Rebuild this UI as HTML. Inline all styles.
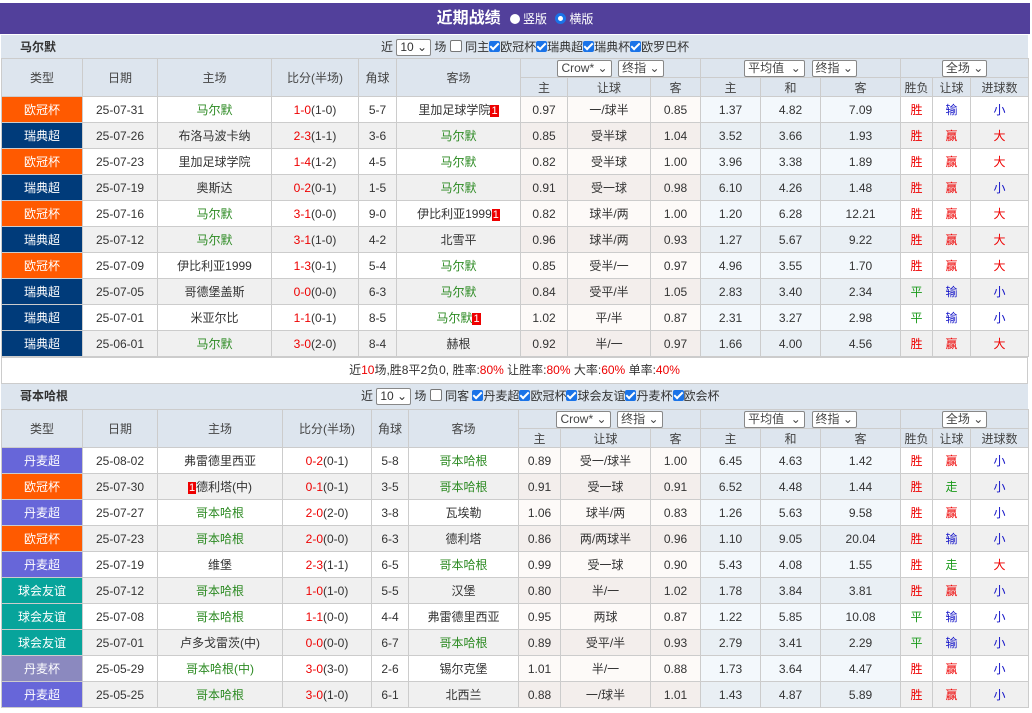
<!DOCTYPE html><html><head><meta charset="utf-8"><style>
body{margin:0;background:#fff;font-family:"Liberation Sans","Noto Sans CJK SC",sans-serif;font-size:12px;color:#333;width:1032px;height:713px;overflow:hidden}
.title{position:absolute;left:0;top:3px;width:1030px;height:31px;background:#52409b;color:#fff;text-align:center;line-height:31px;font-size:16px;font-weight:bold}
.title span{font-size:12px;font-weight:normal}
.rad{display:inline-block;width:10px;height:10px;border-radius:50%;background:#fff;vertical-align:-1px;margin:0 3px 0 5px}
.rad2{background:#fff;border:3px solid #1a73e8;width:5px;height:5px}
.sec{position:absolute;left:1px;width:1027px;height:25px;background:#dde5ee;line-height:25px}
.sec b{position:absolute;left:19px;font-size:12px}
.sec .f{position:absolute;top:0;white-space:nowrap;font-size:12px}
.sel{display:inline-block;border:1px solid #888;background:#fff;height:15px;line-height:15px;padding:0 3px;vertical-align:middle;border-radius:2px;font-size:12px}
.cb{display:inline-block;width:11px;height:11px;border-radius:2px;background:#1a73e8;vertical-align:-1px;position:relative}
.cb:after{content:"";position:absolute;left:3px;top:0px;width:3px;height:7px;border:solid #fff;border-width:0 2px 2px 0;transform:rotate(45deg)}
.cbe{display:inline-block;width:10px;height:10px;border:1px solid #777;border-radius:2px;background:#fff;vertical-align:-1px}
table{position:absolute;left:1px;border-collapse:collapse;table-layout:fixed;width:1027px}
td{border:1px solid #ccc;text-align:center;height:25px;padding:0;white-space:nowrap;overflow:hidden;font-size:12px}
tr.h td{background:#dde5ee;height:18px;color:#444}
tr.g td{background:#f0f0f0}
tr.g td.o{background:#f3eeec}tr.g td.a{background:#e9eff4}
td.o{background:#fdfaf8}td.a{background:#f3f8fc}
.t{color:#fff!important}
.ucl{background:#ff5a00!important}.swe{background:#003b7a!important}.dk{background:#6766d9!important}.fr{background:#07a49b!important}.dc{background:#8b89bf!important}
.gr{color:#2c8a22}.r{color:#e00}.bl{color:#1515c8}.gn{color:#1a9a1a}
.n{background:#e00;color:#fff;padding:0 1px;font-size:11px}
.sum{position:absolute;left:1px;top:357px;width:1025px;height:25px;border:1px solid #ccc;text-align:center;line-height:25px}
</style></head><body>
<div class="title">近期战绩 <span><i class="rad"></i>竖版 <i class="rad rad2"></i>横版</span></div>

<div class="sec" style="top:35px"><b>马尔默</b><div class="f" style="left:380px">近 <span class="sel">10 ⌄</span> 场 <i class="cbe"></i> 同主<i class="cb"></i>欧冠杯<i class="cb"></i>瑞典超<i class="cb"></i>瑞典杯<i class="cb"></i>欧罗巴杯</div></div>
<table style="top:58px">
<colgroup><col style="width:81px"><col style="width:75px"><col style="width:114px"><col style="width:87px"><col style="width:38px"><col style="width:124px"><col style="width:47px"><col style="width:83px"><col style="width:50px"><col style="width:60px"><col style="width:60px"><col style="width:80px"><col style="width:32px"><col style="width:38px"><col style="width:58px"></colgroup>
<tr class="h"><td rowspan="2">类型</td><td rowspan="2">日期</td><td rowspan="2">主场</td><td rowspan="2">比分(半场)</td><td rowspan="2">角球</td><td rowspan="2">客场</td><td colspan="3"><span class="sel">Crow* ⌄</span> &nbsp;<span class="sel">终指 ⌄</span></td><td colspan="3"><span class="sel">平均值 &nbsp;⌄</span> &nbsp;<span class="sel">终指 ⌄</span></td><td colspan="3"><span class="sel">全场 ⌄</span></td></tr>
<tr class="h"><td>主</td><td>让球</td><td>客</td><td>主</td><td>和</td><td>客</td><td>胜负</td><td>让球</td><td>进球数</td></tr>
<tr><td class="t ucl">欧冠杯</td><td>25-07-31</td><td class="gr">马尔默</td><td><span class="r">1-0</span>(1-0)</td><td>5-7</td><td>里加足球学院<span class="n">1</span></td><td class="o">0.97</td><td class="o">一/球半</td><td class="o">0.85</td><td class="a">1.37</td><td class="a">4.82</td><td class="a">7.09</td><td class="r">胜</td><td class="bl">输</td><td class="bl">小</td></tr>
<tr class="g"><td class="t swe">瑞典超</td><td>25-07-26</td><td>布洛马波卡纳</td><td><span class="r">2-3</span>(1-1)</td><td>3-6</td><td class="gr">马尔默</td><td class="o">0.85</td><td class="o">受半球</td><td class="o">1.04</td><td class="a">3.52</td><td class="a">3.66</td><td class="a">1.93</td><td class="r">胜</td><td class="r">赢</td><td class="r">大</td></tr>
<tr><td class="t ucl">欧冠杯</td><td>25-07-23</td><td>里加足球学院</td><td><span class="r">1-4</span>(1-2)</td><td>4-5</td><td class="gr">马尔默</td><td class="o">0.82</td><td class="o">受半球</td><td class="o">1.00</td><td class="a">3.96</td><td class="a">3.38</td><td class="a">1.89</td><td class="r">胜</td><td class="r">赢</td><td class="r">大</td></tr>
<tr class="g"><td class="t swe">瑞典超</td><td>25-07-19</td><td>奥斯达</td><td><span class="r">0-2</span>(0-1)</td><td>1-5</td><td class="gr">马尔默</td><td class="o">0.91</td><td class="o">受一球</td><td class="o">0.98</td><td class="a">6.10</td><td class="a">4.26</td><td class="a">1.48</td><td class="r">胜</td><td class="r">赢</td><td class="bl">小</td></tr>
<tr><td class="t ucl">欧冠杯</td><td>25-07-16</td><td class="gr">马尔默</td><td><span class="r">3-1</span>(0-0)</td><td>9-0</td><td>伊比利亚1999<span class="n">1</span></td><td class="o">0.82</td><td class="o">球半/两</td><td class="o">1.00</td><td class="a">1.20</td><td class="a">6.28</td><td class="a">12.21</td><td class="r">胜</td><td class="r">赢</td><td class="r">大</td></tr>
<tr class="g"><td class="t swe">瑞典超</td><td>25-07-12</td><td class="gr">马尔默</td><td><span class="r">3-1</span>(1-0)</td><td>4-2</td><td>北雪平</td><td class="o">0.96</td><td class="o">球半/两</td><td class="o">0.93</td><td class="a">1.27</td><td class="a">5.67</td><td class="a">9.22</td><td class="r">胜</td><td class="r">赢</td><td class="r">大</td></tr>
<tr><td class="t ucl">欧冠杯</td><td>25-07-09</td><td>伊比利亚1999</td><td><span class="r">1-3</span>(0-1)</td><td>5-4</td><td class="gr">马尔默</td><td class="o">0.85</td><td class="o">受半/一</td><td class="o">0.97</td><td class="a">4.96</td><td class="a">3.55</td><td class="a">1.70</td><td class="r">胜</td><td class="r">赢</td><td class="r">大</td></tr>
<tr class="g"><td class="t swe">瑞典超</td><td>25-07-05</td><td>哥德堡盖斯</td><td><span class="r">0-0</span>(0-0)</td><td>6-3</td><td class="gr">马尔默</td><td class="o">0.84</td><td class="o">受平/半</td><td class="o">1.05</td><td class="a">2.83</td><td class="a">3.40</td><td class="a">2.34</td><td class="gn">平</td><td class="bl">输</td><td class="bl">小</td></tr>
<tr><td class="t swe">瑞典超</td><td>25-07-01</td><td>米亚尔比</td><td><span class="r">1-1</span>(0-1)</td><td>8-5</td><td class="gr">马尔默<span class="n">1</span></td><td class="o">1.02</td><td class="o">平/半</td><td class="o">0.87</td><td class="a">2.31</td><td class="a">3.27</td><td class="a">2.98</td><td class="gn">平</td><td class="bl">输</td><td class="bl">小</td></tr>
<tr class="g"><td class="t swe">瑞典超</td><td>25-06-01</td><td class="gr">马尔默</td><td><span class="r">3-0</span>(2-0)</td><td>8-4</td><td>赫根</td><td class="o">0.92</td><td class="o">半/一</td><td class="o">0.97</td><td class="a">1.66</td><td class="a">4.00</td><td class="a">4.56</td><td class="r">胜</td><td class="r">赢</td><td class="r">大</td></tr>
</table>
<div class="sum">近<span class="r">10</span>场,胜8平2负0, 胜率:<span class="r">80%</span> 让胜率:<span class="r">80%</span> 大率:<span class="r">60%</span> 单率:<span class="r">40%</span></div>

<div class="sec" style="top:384px"><b>哥本哈根</b><div class="f" style="left:360px">近 <span class="sel">10 ⌄</span> 场 <i class="cbe"></i> 同客 <i class="cb"></i>丹麦超<i class="cb"></i>欧冠杯<i class="cb"></i>球会友谊<i class="cb"></i>丹麦杯<i class="cb"></i>欧会杯</div></div>
<table style="top:409px">
<colgroup><col style="width:81px"><col style="width:75px"><col style="width:125px"><col style="width:89px"><col style="width:37px"><col style="width:110px"><col style="width:42px"><col style="width:90px"><col style="width:50px"><col style="width:60px"><col style="width:60px"><col style="width:80px"><col style="width:32px"><col style="width:38px"><col style="width:58px"></colgroup>
<tr class="h"><td rowspan="2">类型</td><td rowspan="2">日期</td><td rowspan="2">主场</td><td rowspan="2">比分(半场)</td><td rowspan="2">角球</td><td rowspan="2">客场</td><td colspan="3"><span class="sel">Crow* ⌄</span> &nbsp;<span class="sel">终指 ⌄</span></td><td colspan="3"><span class="sel">平均值 &nbsp;⌄</span> &nbsp;<span class="sel">终指 ⌄</span></td><td colspan="3"><span class="sel">全场 ⌄</span></td></tr>
<tr class="h"><td>主</td><td>让球</td><td>客</td><td>主</td><td>和</td><td>客</td><td>胜负</td><td>让球</td><td>进球数</td></tr>
<tr><td class="t dk">丹麦超</td><td>25-08-02</td><td>弗雷德里西亚</td><td><span class="r">0-2</span>(0-1)</td><td>5-8</td><td class="gr">哥本哈根</td><td class="o">0.89</td><td class="o">受一/球半</td><td class="o">1.00</td><td class="a">6.45</td><td class="a">4.63</td><td class="a">1.42</td><td class="r">胜</td><td class="r">赢</td><td class="bl">小</td></tr>
<tr class="g"><td class="t ucl">欧冠杯</td><td>25-07-30</td><td><span class="n">1</span>德利塔(中)</td><td><span class="r">0-1</span>(0-1)</td><td>3-5</td><td class="gr">哥本哈根</td><td class="o">0.91</td><td class="o">受一球</td><td class="o">0.91</td><td class="a">6.52</td><td class="a">4.48</td><td class="a">1.44</td><td class="r">胜</td><td class="gn">走</td><td class="bl">小</td></tr>
<tr><td class="t dk">丹麦超</td><td>25-07-27</td><td class="gr">哥本哈根</td><td><span class="r">2-0</span>(2-0)</td><td>3-8</td><td>瓦埃勒</td><td class="o">1.06</td><td class="o">球半/两</td><td class="o">0.83</td><td class="a">1.26</td><td class="a">5.63</td><td class="a">9.58</td><td class="r">胜</td><td class="r">赢</td><td class="bl">小</td></tr>
<tr class="g"><td class="t ucl">欧冠杯</td><td>25-07-23</td><td class="gr">哥本哈根</td><td><span class="r">2-0</span>(0-0)</td><td>6-3</td><td>德利塔</td><td class="o">0.86</td><td class="o">两/两球半</td><td class="o">0.96</td><td class="a">1.10</td><td class="a">9.05</td><td class="a">20.04</td><td class="r">胜</td><td class="bl">输</td><td class="bl">小</td></tr>
<tr><td class="t dk">丹麦超</td><td>25-07-19</td><td>维堡</td><td><span class="r">2-3</span>(1-1)</td><td>6-5</td><td class="gr">哥本哈根</td><td class="o">0.99</td><td class="o">受一球</td><td class="o">0.90</td><td class="a">5.43</td><td class="a">4.08</td><td class="a">1.55</td><td class="r">胜</td><td class="gn">走</td><td class="r">大</td></tr>
<tr class="g"><td class="t fr">球会友谊</td><td>25-07-12</td><td class="gr">哥本哈根</td><td><span class="r">1-0</span>(1-0)</td><td>5-5</td><td>汉堡</td><td class="o">0.80</td><td class="o">半/一</td><td class="o">1.02</td><td class="a">1.78</td><td class="a">3.84</td><td class="a">3.81</td><td class="r">胜</td><td class="r">赢</td><td class="bl">小</td></tr>
<tr><td class="t fr">球会友谊</td><td>25-07-08</td><td class="gr">哥本哈根</td><td><span class="r">1-1</span>(0-0)</td><td>4-4</td><td>弗雷德里西亚</td><td class="o">0.95</td><td class="o">两球</td><td class="o">0.87</td><td class="a">1.22</td><td class="a">5.85</td><td class="a">10.08</td><td class="gn">平</td><td class="bl">输</td><td class="bl">小</td></tr>
<tr class="g"><td class="t fr">球会友谊</td><td>25-07-01</td><td>卢多戈雷茨(中)</td><td><span class="r">0-0</span>(0-0)</td><td>6-7</td><td class="gr">哥本哈根</td><td class="o">0.89</td><td class="o">受平/半</td><td class="o">0.93</td><td class="a">2.79</td><td class="a">3.41</td><td class="a">2.29</td><td class="gn">平</td><td class="bl">输</td><td class="bl">小</td></tr>
<tr><td class="t dc">丹麦杯</td><td>25-05-29</td><td class="gr">哥本哈根(中)</td><td><span class="r">3-0</span>(3-0)</td><td>2-6</td><td>锡尔克堡</td><td class="o">1.01</td><td class="o">半/一</td><td class="o">0.88</td><td class="a">1.73</td><td class="a">3.64</td><td class="a">4.47</td><td class="r">胜</td><td class="r">赢</td><td class="bl">小</td></tr>
<tr class="g"><td class="t dk">丹麦超</td><td>25-05-25</td><td class="gr">哥本哈根</td><td><span class="r">3-0</span>(1-0)</td><td>6-1</td><td>北西兰</td><td class="o">0.88</td><td class="o">一/球半</td><td class="o">1.01</td><td class="a">1.43</td><td class="a">4.87</td><td class="a">5.89</td><td class="r">胜</td><td class="r">赢</td><td class="bl">小</td></tr>
</table>
</body></html>
